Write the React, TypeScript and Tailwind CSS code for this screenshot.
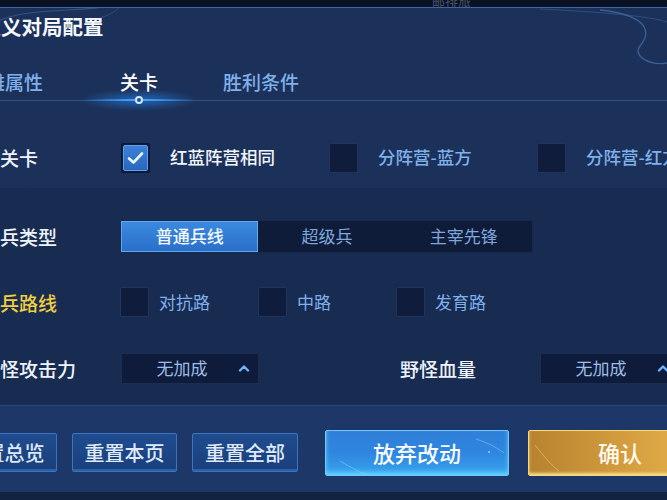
import React from 'react'

const FONT = { fontFamily: '"Noto Sans CJK SC", "Noto Sans", sans-serif' }

function CheckBox({ checked = false }: { checked?: boolean }) {
  if (checked) {
    return (
      <div className="w-[29px] h-[30px] shrink-0 rounded-[2px] border border-[#0b1733] p-[1px] bg-[#0f1d3c]">
        <div className="w-full h-full rounded-[2px] border border-[#5c9fe8] bg-gradient-to-b from-[#3b82d8] to-[#2a66bd] flex items-center justify-center">
          <svg width="17" height="14" viewBox="0 0 17 14">
            <path d="M2 7.5 L6.5 11.5 L15 2.5" fill="none" stroke="#eaf6ff" strokeWidth="2.6" strokeLinecap="round" strokeLinejoin="round" />
          </svg>
        </div>
      </div>
    )
  }
  return <div className="w-[29px] h-[30px] shrink-0 rounded-[2px] border border-[#1f3560] bg-[#0f1c3b]" />
}

function Dropdown({ value }: { value: string }) {
  return (
    <div className="w-[138px] h-[31px] shrink-0 flex items-center bg-[#0e1b3a] border border-[#1a2d55]">
      <span className="flex-1 text-center text-[17px] text-[#9dbde6] pl-[4px]">{value}</span>
      <svg width="12" height="8" viewBox="0 0 12 8" className="mr-[8px]">
        <path d="M2 6.5 L6 2.5 L10 6.5" fill="none" stroke="#6fb4ff" strokeWidth="2.4" strokeLinecap="round" strokeLinejoin="round" />
      </svg>
    </div>
  )
}

function Label({ text, yellow = false, pad = false }: { text: string; yellow?: boolean; pad?: boolean }) {
  return (
    <div
      className={`w-[139px] -ml-[19px] shrink-0 text-[19px] font-medium leading-none ${pad ? 'pl-[19px]' : ''} ${
        yellow ? 'text-[#f2cf3e]' : 'text-[#eef4fc]'
      }`}
    >
      {text}
    </div>
  )
}

function SmallButton({ text, className = '' }: { text: string; className?: string }) {
  return (
    <div
      className={`h-[39px] shrink-0 flex items-center justify-center rounded-[2px] border border-[#3d74bf] bg-gradient-to-b from-[#1f4c8f] to-[#1a3f7b] shadow-[inset_0_-2px_0_#2a61a8] text-[20px] font-medium text-[#dfe9f8] ${className}`}
    >
      {text}
    </div>
  )
}

export default function App() {
  return (
    <div className="relative w-[667px] h-[500px] overflow-hidden bg-[#0a1122] select-none" style={FONT}>
      {/* top strip */}
      <div className="relative h-[7px] overflow-hidden">
        <span className="absolute left-[432px] -top-[9px] text-[13px] text-[#6f7f99] opacity-60">邮排旅</span>
      </div>

      <div className="relative flex flex-col border-t border-[#3867a7] bg-[#1b3159]">
        {/* decorative swirls */}
        <svg className="absolute left-0 top-0 pointer-events-none" width="667" height="70" viewBox="0 0 667 70">
          <path d="M0 12 C30 0, 80 4, 110 -2" fill="none" stroke="#3e6aa8" strokeWidth="1.2" opacity="0.6" />
          <path d="M100 10 C112 6, 118 2, 120 -2" fill="none" stroke="#3e6aa8" strokeWidth="1" opacity="0.5" />
          <path d="M600 2 C640 6, 655 20, 640 38 C632 48, 650 58, 667 55" fill="none" stroke="#5584c2" strokeWidth="1.4" opacity="0.55" />
          <path d="M540 1 C600 4, 650 8, 667 14" fill="none" stroke="#3c69a8" strokeWidth="1" opacity="0.5" />
        </svg>

        {/* title */}
        <div className="h-[48px] pt-[8px]">
          <div className="-ml-[40px] text-[20.5px] font-bold leading-none text-[#f4f8fe]">自定义对局配置</div>
        </div>

        {/* tabs */}
        <div className="relative h-[45px] border-b border-[#2c5389] flex items-start pt-[16px]">
          <div className="-ml-[33px] text-[19px] leading-none font-medium text-[#7fb0ea]">英雄属性</div>
          <div className="relative ml-[77px] text-[19px] leading-none font-medium text-white">
            关卡
            <div className="absolute left-1/2 -translate-x-1/2 top-[17px] w-[120px] h-[22px] bg-[radial-gradient(ellipse_at_center,rgba(40,140,255,0.55),rgba(40,140,255,0)_70%)]" />
            <div className="absolute left-1/2 -translate-x-1/2 top-[27px] w-[110px] h-[2px] bg-gradient-to-r from-transparent via-[#49a8ff] to-transparent" />
            <div className="absolute left-1/2 -translate-x-1/2 top-[24px] w-[8px] h-[8px] rounded-full border-2 border-[#cfe7ff] bg-[#1d4f95]" />
          </div>
          <div className="ml-[65px] text-[19px] leading-none font-medium text-[#7fb0ea]">胜利条件</div>
        </div>

        {/* row 1 */}
        <div className="h-[87px] pt-[26px] flex items-center">
          <Label text="关卡" pad />
          <div className="w-[209px] flex items-center shrink-0 pl-[1px]">
            <CheckBox checked />
            <span className="ml-[20px] text-[17.5px] font-medium text-[#f1f6fd]">红蓝阵营相同</span>
          </div>
          <div className="w-[208px] flex items-center shrink-0">
            <CheckBox />
            <span className="ml-[20px] text-[17.5px] font-medium text-[#7fb0ea]">分阵营-蓝方</span>
          </div>
          <div className="w-[208px] flex items-center shrink-0">
            <CheckBox />
            <span className="ml-[20px] text-[17.5px] font-medium text-[#7fb0ea] whitespace-nowrap">分阵营-红方</span>
          </div>
        </div>

        {/* lower settings */}
        <div className="relative h-[217px] pt-[15px] bg-[#182b51]">
          <div className="absolute left-[8px] -top-[8px] w-0 h-0 border-l-[10px] border-r-[10px] border-b-[8px] border-l-transparent border-r-transparent border-b-[#1c3159]" />

          <div className="h-[66px] flex items-center">
            <Label text="小兵类型" />
            <div className="flex h-[33px] w-[413px] shrink-0 bg-[#0e1b39] border border-[#17294f]">
              <div className="w-[138px] flex items-center justify-center border border-[#5ea8f0] bg-gradient-to-b from-[#3a8ae0] to-[#2b6fc8] text-[17px] font-medium text-[#f5f9ff]">
                普通兵线
              </div>
              <div className="w-[138px] flex items-center justify-center text-[17px] text-[#7fa7da]">超级兵</div>
              <div className="w-[137px] flex items-center justify-center text-[17px] text-[#7fa7da]">主宰先锋</div>
            </div>
          </div>

          <div className="h-[66px] flex items-center">
            <Label text="小兵路线" yellow />
            <div className="w-[138px] flex items-center shrink-0">
              <CheckBox />
              <span className="ml-[10px] text-[17px] text-[#7fb0ea]">对抗路</span>
            </div>
            <div className="w-[138px] flex items-center shrink-0">
              <CheckBox />
              <span className="ml-[10px] text-[17px] text-[#7fb0ea]">中路</span>
            </div>
            <div className="w-[138px] flex items-center shrink-0">
              <CheckBox />
              <span className="ml-[10px] text-[17px] text-[#7fb0ea]">发育路</span>
            </div>
          </div>

          <div className="h-[66px] flex items-center">
            <Label text="野怪攻击力" />
            <div className="pl-[1px]">
              <Dropdown value="无加成" />
            </div>
            <div className="ml-[141px] w-[140px] shrink-0 text-[19px] font-medium leading-none text-[#eef4fc]">野怪血量</div>
            <Dropdown value="无加成" />
          </div>
        </div>

        {/* bottom bar */}
        <div className="h-[87px] pt-[7px] flex items-center bg-[#1d3868] border-t border-[#28497d]">
          <SmallButton text="配置总览" className="-ml-[48px] w-[105px]" />
          <SmallButton text="重置本页" className="ml-[15px] w-[105px]" />
          <SmallButton text="重置全部" className="ml-[15px] w-[106px]" />
          <div className="relative ml-[27px] w-[184px] h-[46px] shrink-0 flex items-center justify-center rounded-[2px] border border-[#74c4ff] bg-gradient-to-b from-[#2f7fd8] via-[#2f86df] to-[#37a3ee] shadow-[inset_0_-3px_4px_#5fd4ff] text-[22px] font-medium text-[#f7fbff]">
            <svg className="absolute left-0 top-0" width="184" height="46" viewBox="0 0 184 46">
              <path d="M14 30 C24 36, 32 40, 40 44" stroke="#9ad6ff" strokeWidth="1" fill="none" opacity="0.5" />
              <path d="M150 8 C162 12, 170 16, 178 22" stroke="#9ad6ff" strokeWidth="1" fill="none" opacity="0.45" />
              <circle cx="163" cy="21" r="1" fill="#d6f0ff" opacity="0.7" />
            </svg>
            <span className="relative">放弃改动</span>
          </div>
          <div className="relative ml-[19px] w-[184px] h-[46px] shrink-0 flex items-center justify-center rounded-[2px] border border-[#f7d87a] bg-gradient-to-r from-[#b7822f] via-[#d29c3e] to-[#e8b54c] shadow-[inset_0_-2px_3px_#f8df8a] text-[22px] font-medium text-[#fffaf0]">
            <svg className="absolute left-0 top-0" width="184" height="46" viewBox="0 0 184 46">
              <path d="M6 14 C14 24, 20 32, 30 40" stroke="#f3d58f" strokeWidth="1" fill="none" opacity="0.5" />
            </svg>
            <span className="relative">确认</span>
          </div>
        </div>

        <div className="h-[8px] bg-[#122342]" />
      </div>
    </div>
  )
}
